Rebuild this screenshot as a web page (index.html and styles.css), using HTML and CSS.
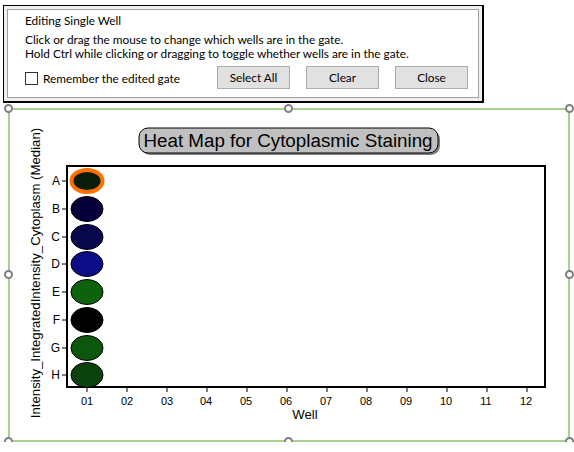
FILE: index.html
```html
<!DOCTYPE html>
<html lang="en">
<head>
	<meta charset="UTF-8">
	<title>Heat Map</title>
	<link rel="stylesheet" href="styles.css">
</head>
<body>
	<div class="dialog">
		<div class="dialog-inner">
			<div class="dialog-title">Editing Single Well</div>
			<div class="dialog-help">
				<div>Click or drag the mouse to change which wells are in the gate.</div>
				<div>Hold Ctrl while clicking or dragging to toggle whether wells are in the gate.</div>
			</div>
			<div class="dialog-row">
				<label class="remember"><span class="check"></span>Remember the edited gate</label>
				<div class="buttons">
					<span class="btn">Select All</span>
					<span class="btn">Clear</span>
					<span class="btn">Close</span>
				</div>
			</div>
		</div>
	</div>

	<div class="frame">
		<svg class="chart" width="558" height="330" viewBox="10 109 558 330">
			<!-- title -->
			<rect x="141" y="129" width="299" height="25" rx="9" fill="#808080"/>
			<rect x="139" y="127" width="299" height="25" rx="9" fill="#c0c0c0" stroke="#000" stroke-width="1"/>
			<text x="288" y="146" class="title">Heat Map for Cytoplasmic Staining</text>

			<!-- plot area -->
			<rect x="67" y="165" width="478" height="221" fill="#fff" stroke="#000" stroke-width="2"/>

			<!-- rows -->
			<g class="ylabels">
				<text x="60" y="184">A</text>
				<text x="60" y="212">B</text>
				<text x="60" y="240">C</text>
				<text x="60" y="267">D</text>
				<text x="60" y="295">E</text>
				<text x="60" y="323">F</text>
				<text x="60" y="351">G</text>
				<text x="60" y="378">H</text>
			</g>
			<g stroke="#000" stroke-width="1">
				<line x1="62" y1="180" x2="67" y2="180"/>
				<line x1="62" y1="208" x2="67" y2="208"/>
				<line x1="62" y1="236" x2="67" y2="236"/>
				<line x1="62" y1="263" x2="67" y2="263"/>
				<line x1="62" y1="291" x2="67" y2="291"/>
				<line x1="62" y1="319" x2="67" y2="319"/>
				<line x1="62" y1="347" x2="67" y2="347"/>
				<line x1="62" y1="374" x2="67" y2="374"/>
			</g>

			<!-- wells, column 01 -->
			<ellipse cx="87" cy="180" rx="15.5" ry="11" fill="#0b1c0b" stroke="#ff7000" stroke-width="4"/>
			<g stroke="#000" stroke-width="1">
				<ellipse cx="87" cy="208" rx="16" ry="12.5" fill="#05003a"/>
				<ellipse cx="87" cy="236" rx="16" ry="12.5" fill="#07074c"/>
				<ellipse cx="87" cy="263" rx="16" ry="12.5" fill="#0c0c86"/>
				<ellipse cx="87" cy="291" rx="16" ry="12.5" fill="#0d620d"/>
				<ellipse cx="87" cy="319" rx="16" ry="12.5" fill="#000"/>
				<ellipse cx="87" cy="347" rx="16" ry="12.5" fill="#0d560d"/>
				<ellipse cx="87" cy="374" rx="16" ry="12.5" fill="#0b420b"/>
			</g>

			<!-- columns -->
			<g stroke="#000" stroke-width="1">
				<line x1="87" y1="386" x2="87" y2="391"/>
				<line x1="127" y1="386" x2="127" y2="391"/>
				<line x1="167" y1="386" x2="167" y2="391"/>
				<line x1="207" y1="386" x2="207" y2="391"/>
				<line x1="247" y1="386" x2="247" y2="391"/>
				<line x1="287" y1="386" x2="287" y2="391"/>
				<line x1="327" y1="386" x2="327" y2="391"/>
				<line x1="367" y1="386" x2="367" y2="391"/>
				<line x1="407" y1="386" x2="407" y2="391"/>
				<line x1="447" y1="386" x2="447" y2="391"/>
				<line x1="487" y1="386" x2="487" y2="391"/>
				<line x1="527" y1="386" x2="527" y2="391"/>
			</g>
			<g class="xlabels">
				<text x="87" y="404">01</text>
				<text x="127" y="404">02</text>
				<text x="167" y="404">03</text>
				<text x="206" y="404">04</text>
				<text x="246" y="404">05</text>
				<text x="286" y="404">06</text>
				<text x="326" y="404">07</text>
				<text x="366" y="404">08</text>
				<text x="406" y="404">09</text>
				<text x="446" y="404">10</text>
				<text x="486" y="404">11</text>
				<text x="526" y="404">12</text>
			</g>
			<text x="305" y="418" class="axis">Well</text>
			<text x="40" y="272" class="axis" transform="rotate(-90 40 272)">Intensity_IntegratedIntensity_Cytoplasm (Median)</text>
		</svg>

		<span class="handle tl"></span>
		<span class="handle tc"></span>
		<span class="handle tr"></span>
		<span class="handle ml"></span>
		<span class="handle mr"></span>
		<span class="handle bl"></span>
		<span class="handle bc"></span>
		<span class="handle br"></span>
	</div>
</body>
</html>
```
FILE: styles.css
```css
body{
	margin: 0;
	background: #fff;
	font-family: Lato, "Noto Sans", sans-serif;
}
/* dialog box */
.dialog{
	box-sizing: border-box;
	width: 481px;
	height: 98px;
	margin: 5px 0 0 3px;
	border: 1px solid #000;
	border-right-width: 2px;
	border-bottom-width: 2px;
	background: #f0f0f0;
	padding: 3px;
}
.dialog-inner{
	box-sizing: border-box;
	height: 100%;
	border: 1px solid #a0a0a0;
	background: #fff;
	padding: 2px 10px 0 17px;
	font-size: 11.8px;
	color: #000;
}
.dialog-title{
	line-height: 16px;
	margin-top: 1px;
}
.dialog-help{
	margin-top: 4px;
	line-height: 14px;
}
.dialog-row{
	display: flex;
	justify-content: space-between;
	align-items: center;
	margin-top: 5px;
}
.remember{
	display: flex;
	align-items: center;
	gap: 5px;
	margin-top: 2px;
}
.check{
	box-sizing: border-box;
	width: 13px;
	height: 13px;
	border: 1px solid #333;
	background: #fff;
}
.buttons{
	display: flex;
	gap: 16px;
}
.btn{
	box-sizing: border-box;
	width: 73px;
	height: 23px;
	line-height: 21px;
	text-align: center;
	border: 1px solid #adadad;
	background: #e1e1e1;
}

/* chart with selection frame */
.frame{
	position: relative;
	box-sizing: border-box;
	width: 562px;
	height: 334px;
	margin: 5px 0 0 8px;
	border: 2px solid #a9d18e;
}
.chart{
	display: block;
}
.chart text{
	font-family: "Liberation Sans", Arial, sans-serif;
	fill: #000;
}
.title{
	font-size: 18.8px;
	text-anchor: middle;
}
.ylabels text{
	font-size: 12px;
	text-anchor: end;
}
.xlabels text{
	font-size: 11px;
	text-anchor: middle;
}
.axis{
	font-size: 13.2px;
	text-anchor: middle;
}
.handle{
	position: absolute;
	box-sizing: border-box;
	width: 9px;
	height: 9px;
	border: 2px solid #7f7f7f;
	border-radius: 50%;
	background: #fff;
}
.tl, .tc, .tr{ top: -6px; }
.bl, .bc, .br{ bottom: -6px; }
.ml, .mr{ top: calc(50% - 5px); }
.tl, .ml, .bl{ left: -6px; }
.tr, .mr, .br{ right: -6px; }
.tc, .bc{ left: calc(50% - 5px); }
```
